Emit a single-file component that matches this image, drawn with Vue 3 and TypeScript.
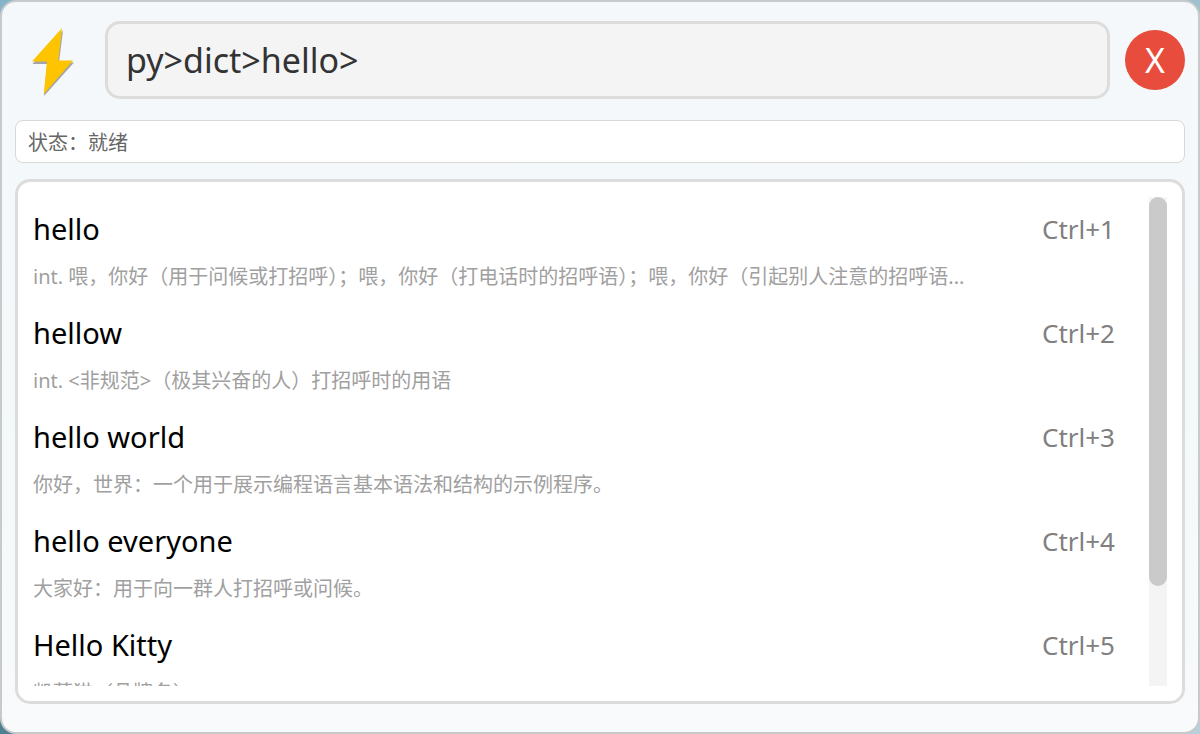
<script setup lang="ts">
import { onBeforeUnmount, onMounted, ref } from 'vue'

interface Result {
  title: string
  detail: string
}

const query = ref<string>('py>dict>hello>')
const status = ref<string>('就绪')

const results: Result[] = [
  {
    title: 'hello',
    detail:
      'int. 喂，你好（用于问候或打招呼）；喂，你好（打电话时的招呼语）；喂，你好（引起别人注意的招呼语...',
  },
  { title: 'hellow', detail: 'int. <非规范>（极其兴奋的人）打招呼时的用语' },
  { title: 'hello world', detail: '你好，世界：一个用于展示编程语言基本语法和结构的示例程序。' },
  { title: 'hello everyone', detail: '大家好：用于向一群人打招呼或问候。' },
  { title: 'Hello Kitty', detail: '凯蒂猫（品牌名）' },
]

const list = ref<HTMLUListElement | null>(null)
const thumbSize = ref<number>(80)
const thumbTop = ref<number>(0)

/* Thumb length and position, as percentages of the track. */
function updateThumb(): void {
  const el = list.value
  if (!el) return
  thumbSize.value = (el.clientHeight / el.scrollHeight) * 100
  thumbTop.value = (el.scrollTop / el.scrollHeight) * 100
}

onMounted(() => {
  updateThumb()
  window.addEventListener('resize', updateThumb)
})
onBeforeUnmount(() => window.removeEventListener('resize', updateThumb))
</script>

<template>
  <main class="launcher">
    <header class="top">
      <svg class="bolt" viewBox="0 0 60 78" aria-hidden="true">
        <path class="bolt-shadow" d="M48 9.500 17.500 43H32L29 75 59 41.500H44Z" />
        <path class="bolt-fill" d="M47 7 17 40.500H32L28.800 73 58 39.500H43.200Z" />
      </svg>
      <input v-model="query" class="query" type="text" aria-label="搜索" spellcheck="false" />
      <button class="close" type="button" aria-label="关闭">X</button>
    </header>

    <p class="status" role="status">状态：{{ status }}</p>

    <section class="panel">
      <ul ref="list" class="results" @scroll="updateThumb">
        <li v-for="(item, i) in results" :key="item.title" class="result">
          <div class="line">
            <span class="title">{{ item.title }}</span>
            <kbd class="shortcut">Ctrl+{{ i + 1 }}</kbd>
          </div>
          <p class="detail">{{ item.detail }}</p>
        </li>
      </ul>
      <div class="track" aria-hidden="true">
        <div class="thumb" :style="{ height: thumbSize + '%', top: thumbTop + '%' }"></div>
      </div>
    </section>
  </main>
</template>

<style>
body {
  background:
    linear-gradient(180deg, #86b4c8, #4f7f93) left / 50% 100% no-repeat,
    linear-gradient(180deg, #9fc0cf, #b8d0da);
}
</style>

<style scoped>
.launcher {
  box-sizing: border-box;
  height: 100vh;
  display: flex;
  flex-direction: column;
  padding: 19px 13px 28px;
  border: 2px solid #c8c9ca;
  border-radius: 16px;
  background: linear-gradient(180deg, #f4f8fb 0%, #f4f9fa 60%, #f8fafb 100%);
  font-family: 'Noto Sans', 'Noto Sans CJK SC', sans-serif;
}

.top {
  display: flex;
  align-items: center;
  gap: 15px;
}

.bolt {
  flex: none;
  width: 60px;
  height: 78px;
  margin-right: 15px;
}

.bolt-fill {
  fill: #ffc400;
}

.bolt-shadow {
  fill: #a3a5a6;
}

.query {
  box-sizing: border-box;
  flex: 1;
  min-width: 0;
  height: 78px;
  padding: 0 18px;
  border: 3px solid #dcdcdc;
  border-radius: 15px;
  outline: none;
  background: #f4f4f4;
  color: #333;
  font: inherit;
  font-size: 34px;
}

.close {
  flex: none;
  width: 60px;
  height: 60px;
  padding: 0;
  border: 0;
  border-radius: 50%;
  background: #e84c3d;
  color: #fff;
  font: inherit;
  font-size: 34px;
  line-height: 60px;
}

.status {
  margin: 21px 0 16px;
  padding: 3px 12px 0;
  border: 1px solid #d8d8d8;
  border-radius: 8px;
  background: #fff;
  color: #666;
  font-size: 20px;
  line-height: 38px;
}

.panel {
  flex: 1;
  min-height: 0;
  display: flex;
  padding: 15px;
  border: 3px solid #dcdcdc;
  border-radius: 15px;
  background: #fff;
}

.results {
  flex: 1;
  min-width: 0;
  margin: 0;
  padding: 0 0 94px;
  overflow-y: auto;
  list-style: none;
  scrollbar-width: none;
}

.track {
  position: relative;
  flex: none;
  width: 18px;
  background: #f4f4f4;
}

.thumb {
  position: absolute;
  width: 100%;
  border-radius: 9px;
  background: #cacaca;
}

.result {
  padding: 11px 34px 8px 0;
}

.line {
  display: flex;
  justify-content: space-between;
  line-height: 42px;
}

.title {
  color: #000;
  font-size: 29px;
}

.shortcut {
  color: #808080;
  font-family: inherit;
  font-size: 26px;
}

.detail {
  width: 90%;
  margin: 11px 0 0;
  overflow: hidden;
  color: #a0a0a0;
  font-size: 20px;
  line-height: 32px;
  text-overflow: ellipsis;
  white-space: nowrap;
}
</style>
